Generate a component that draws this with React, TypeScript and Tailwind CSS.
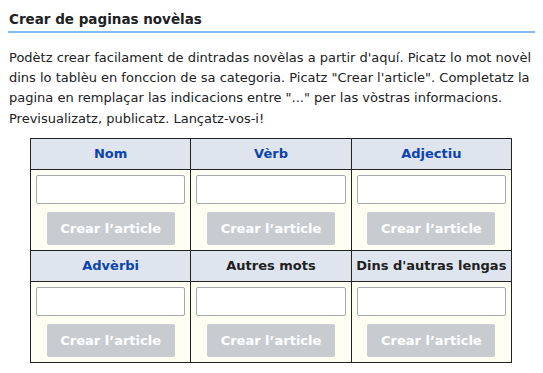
import React from 'react';

const headers1 = [
  { label: 'Nom', link: true },
  { label: 'Vèrb', link: true },
  { label: 'Adjectiu', link: true },
];
const headers2 = [
  { label: 'Advèrbi', link: true },
  { label: 'Autres mots', link: false },
  { label: "Dins d'autras lengas", link: false },
];

const HeaderRow: React.FC<{ items: { label: string; link: boolean }[] }> = ({ items }) => (
  <tr>
    {items.map((h) => (
      <th
        key={h.label}
        className={`border border-[#222] bg-[#dfe5ee] h-[31px] p-0 text-[13px] font-bold text-center ${h.link ? 'text-[#0b43ad]' : 'text-[#202122]'}`}
      >
        {h.label}
      </th>
    ))}
  </tr>
);

const FormRow: React.FC = () => (
  <tr>
    {[0, 1, 2].map((i) => (
      <td key={i} className="border border-[#222] bg-[#fffef3] px-[5px] pt-[5px] pb-[5px] align-top">
        <input
          type="text"
          className="block w-full h-[29px] bg-white border border-[#a2a9b1] rounded-[2px]"
        />
        <div className="flex justify-center mt-[8px]">
          <button className="w-[128px] h-[33px] bg-[#c8ccd1] text-white text-[13px] font-bold rounded-[2px]">
            Crear l’article
          </button>
        </div>
      </td>
    ))}
  </tr>
);

const App: React.FC = () => {
  return (
    <div className="w-[543px] h-[373px] bg-white px-2 text-[#202122]" style={{ fontFamily: '"DejaVu Sans", sans-serif' }}>
      <h2 className="pt-[9px] pb-[2px] pl-px text-[13.5px] leading-[20px] font-bold border-b-2 border-[#7ebff5]">
        Crear de paginas novèlas
      </h2>
      <p className="mt-[15px] pl-px text-[13px] leading-[20.2px]">
        Podètz crear facilament de dintradas novèlas a partir d'aquí. Picatz lo mot novèl dins lo tablèu en fonccion de sa categoria. Picatz "Crear l'article". Completatz la pagina en remplaçar las indicacions entre "..." per las vòstras informacions. Previsualizatz, publicatz. Lançatz-vos-i!
      </p>
      <table className="mt-[9px] ml-[22px] w-[482px] border-collapse table-fixed">
        <tbody>
          <HeaderRow items={headers1} />
          <FormRow />
          <HeaderRow items={headers2} />
          <FormRow />
        </tbody>
      </table>
    </div>
  );
};

export default App;
